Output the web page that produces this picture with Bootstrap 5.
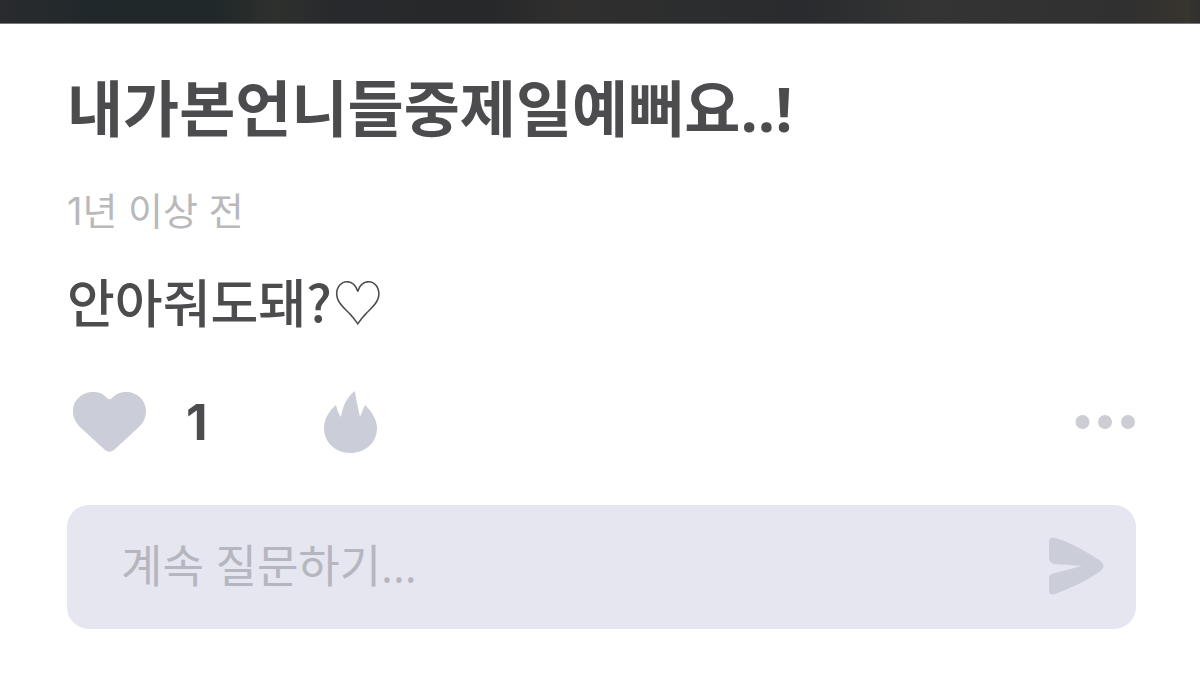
<!DOCTYPE html>
<html lang="ko">
<head>
<meta charset="utf-8">
<meta name="viewport" content="width=device-width, initial-scale=1">
<title>질문과 답변</title>
<link href="https://cdn.jsdelivr.net/npm/bootstrap@5.3.0/dist/css/bootstrap.min.css" rel="stylesheet">
<style>
  body { font-family: "Open Sans", "Noto Sans CJK KR", sans-serif; color: #4c4c4f; background: #fff; }
  .cover-strip {
    height: 24px;
    border-bottom: 1px solid #77787a;
    background: linear-gradient(90deg, #292b2e 0%, #20282b 8%, #20282a 18%, #2e302d 23%, #28292c 28%, #27282a 41%, #302f2e 47%, #2c2d2e 58%, #292b2e 67%, #343434 77%, #303030 94%, #38342e 99%, #302f2f 100%);
  }
  .post { padding: 47px 64px 46px 67px; }
  .question { font-size: 61px; line-height: 76px; font-weight: 700; }
  .posted { font-family: Inter, "Noto Sans CJK KR", sans-serif; font-size: 38px; line-height: 48px; margin-top: 40px; color: #b9b9bb; }
  .answer { font-family: "Noto Sans CJK KR", sans-serif; font-size: 52px; line-height: 64px; margin-top: 34px; font-weight: 500; }
  .answer-heart { font-weight: 100; }
  .actions { height: 64px; margin-top: 57px; }
  .icon-btn { color: #cbced8; line-height: 1; }
  .like-btn { margin-left: 6px; }
  .like-count { font-family: Inter, sans-serif; font-size: 50px; line-height: 64px; font-weight: 700; margin-left: 40px; }
  .fire-btn { margin-left: 116px; }
  .more-btn { color: #cdced3; }
  .ask { height: 124px; margin-top: 51px; padding: 0 32px 2px 54px; border-radius: 22px; background: #e5e6ef; }
  .ask-input { font-size: 45px; line-height: 60px; color: #4c4c4f; }
  .ask-input::placeholder { color: #b5b6bf; opacity: 1; }
</style>
</head>
<body>
<div class="cover-strip"></div>
<main class="post">
  <h1 class="question m-0">내가본언니들중제일예뻐요..!</h1>
  <p class="posted mb-0">1년 이상 전</p>
  <p class="answer mb-0">안아줘도돼?<span class="answer-heart">♡</span></p>
  <div class="actions d-flex align-items-center">
    <button type="button" class="icon-btn like-btn btn p-0 border-0 d-flex" aria-label="좋아요">
      <svg width="73" height="60" viewBox="0 0 73 60" fill="currentColor" aria-hidden="true"><path d="M20 0C27 0 30 2 34 6Q36.500 8.500 39 6C43 2 47 0 53 0C64 0 73 8 73 19C73 26 70 31 66 35L41 58Q36.500 61.500 32 58L7 35C3 31 0 26 0 19C0 8 9 0 20 0Z"/></svg>
    </button>
    <span class="like-count">1</span>
    <button type="button" class="icon-btn fire-btn btn p-0 border-0 d-flex" aria-label="불꽃">
      <svg width="53" height="62" viewBox="0 0 53 62" fill="currentColor" aria-hidden="true"><path d="M31 0C32 9 34 17 36 26C38 21 39 18 41 14C47 20 53 28 53 37C53 52 41 62 26 62C11 62 0 51 0 37C0 28 5 20 12 14C13 18 14 22 17 26C19 14 23 6 31 0Z"/></svg>
    </button>
    <button type="button" class="icon-btn more-btn btn p-0 border-0 d-flex ms-auto" aria-label="더 보기">
      <svg width="62" height="16" viewBox="0 0 62 16" fill="currentColor" aria-hidden="true"><circle cx="8.500" cy="8" r="7"/><circle cx="31" cy="8" r="7"/><circle cx="54" cy="8" r="7"/></svg>
    </button>
  </div>
  <form class="ask d-flex align-items-center">
    <input type="text" class="ask-input form-control border-0 bg-transparent shadow-none p-0" placeholder="계속 질문하기..." aria-label="계속 질문하기">
    <button type="submit" class="icon-btn btn p-0 border-0 d-flex" aria-label="보내기">
      <svg width="55" height="58" viewBox="0 0 55 58" fill="currentColor" aria-hidden="true"><path d="M0 5Q0-1 7 1C22 6 37 14 50 23Q59 29 50 35C37 44 22 51 6 57Q0 59 0 53V41Q0 37 6 36L33 29L6 27Q0 26 0 21Z"/></svg>
    </button>
  </form>
</main>
<script src="https://cdn.jsdelivr.net/npm/bootstrap@5.3.0/dist/js/bootstrap.bundle.min.js"></script>
</body>
</html>
